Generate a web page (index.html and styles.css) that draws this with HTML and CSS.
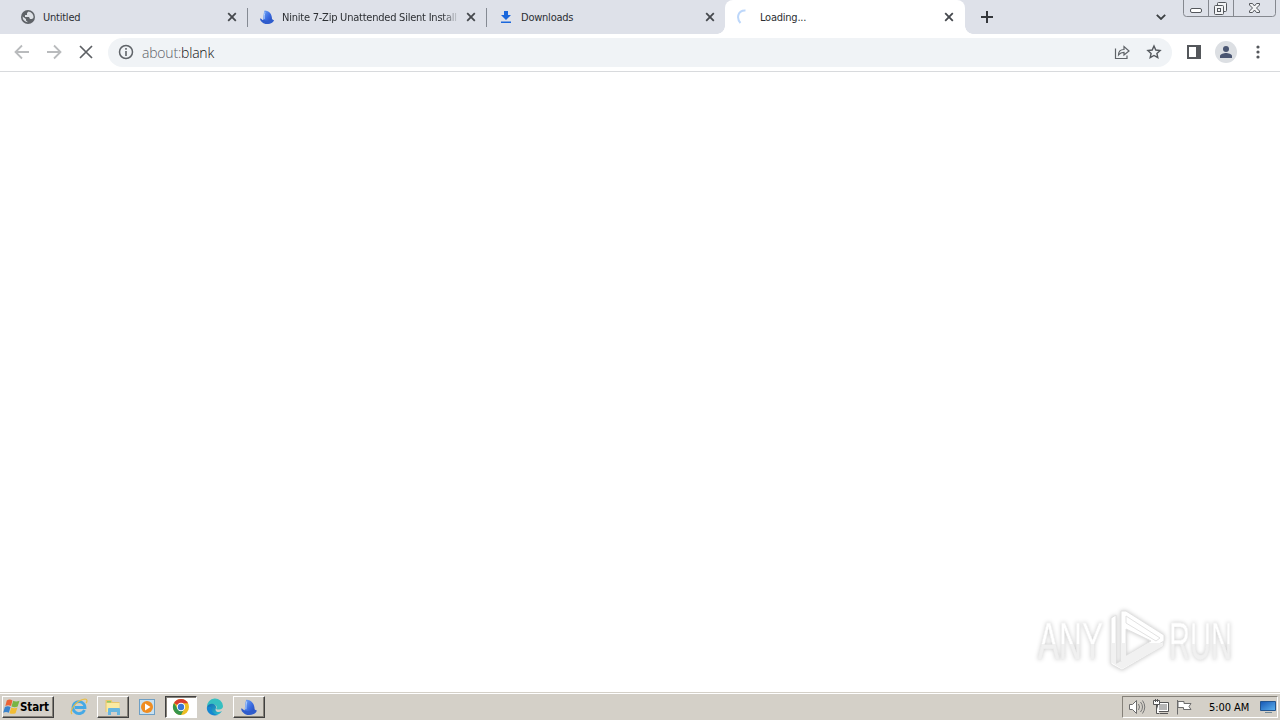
FILE: index.html
```html
<!DOCTYPE html>
<html lang="en"><head><meta charset="utf-8"><title>Loading...</title><link rel="stylesheet" href="styles.css"></head>
<body>
<svg width="0" height="0" class="defs"><defs>
<linearGradient id="fin" x1="0" y1="0" x2="1" y2="1"><stop offset="0" stop-color="#75a9f5"/><stop offset=".55" stop-color="#3869e0"/><stop offset="1" stop-color="#2347b0"/></linearGradient>
<linearGradient id="edge" x1="0" y1="0" x2="1" y2="1"><stop offset="0" stop-color="#1268b4"/><stop offset="1" stop-color="#2fc6cf"/></linearGradient>
<linearGradient id="screen" x1="0" y1="0" x2="1" y2="1"><stop offset="0" stop-color="#1556b3"/><stop offset="1" stop-color="#5eb3ef"/></linearGradient>
<symbol id="close" viewBox="0 0 10 10"><path d="M1.200 1.200l7.600 7.600M8.800 1.200L1.200 8.800" fill="none" stroke="currentColor" stroke-width="1.800"/></symbol>
<symbol id="shark" viewBox="0 0 16 16"><path d="M4 13C4.500 8 4.500 4 5.500 1.500c5 0 7.500 4 7.500 8.500v3c-3 2-6 2-9 0z" fill="url(#fin)"/><path d="M1 9.500c1.500-.5 2 2 4 1.500 3 1.500 6 .5 8-1 .5.5 1 1 2 1-1 4.500-9.500 5.500-12 2-1-.500-1.800-1.800-2-3.500z" fill="#2f5ccc"/><path d="M6 3c-.5 2-.8 4-.8 7" stroke="#a6c8ff" fill="none"/></symbol>
</defs></svg>
<header class="tabstrip">
 <div class="tab first"><svg class="fav" viewBox="0 0 16 16"><circle cx="8" cy="8" r="7" fill="#5f6368"/><path d="M8.500 2.500L7 4v2H5v2h4l1 2h2l1.400-1A5.500 5.500 0 0 0 8.500 2.500zM2.600 7.500L6 10v1.500l2 1.800A5.500 5.500 0 0 1 2.600 7.500z" fill="#dee1e6"/></svg><span class="title">Untitled</span><svg class="x"><use href="#close"/></svg></div>
 <div class="tab"><svg class="fav"><use href="#shark"/></svg><span class="title fade">Ninite 7-Zip Unattended Silent Install</span><svg class="x"><use href="#close"/></svg></div>
 <div class="tab last"><svg class="fav" viewBox="0 0 16 16"><path d="M6 2h4v4h3L8 11 3 6h3zM3 12.500h10V14H3z" fill="#1a67dc"/></svg><span class="title">Downloads</span><svg class="x"><use href="#close"/></svg></div>
 <div class="tab active"><svg class="fav" viewBox="0 0 16 16"><path d="M9.500 1.500C2 1 0 9 4.500 14" fill="none" stroke="#bdd7fa" stroke-width="2"/></svg><span class="title">Loading...</span><svg class="x"><use href="#close"/></svg></div>
 <svg class="plus" viewBox="0 0 12 12"><path d="M6 0v12M0 6h12" stroke="#34373b" stroke-width="2"/></svg>
 <svg class="chev" viewBox="0 0 10 6"><path d="M.8.8L5 5 9.200.8" fill="none" stroke="#3c4043" stroke-width="1.800"/></svg>
 <svg class="winctl" viewBox="0 0 94 18"><path d="M.5 0v13.500q0 3 3 3h86q3 0 3-3V0M25.500 0v16M50.500 0v16" fill="none" stroke="#85888f"/><rect x="7.500" y="8.500" width="11" height="4" rx="1.500" fill="#fff" stroke="#54575c"/><g fill="#f3f4f6" stroke="#54575c"><rect x="34.500" y="2.500" width="9" height="9" rx="1"/><rect x="31.500" y="5.500" width="9" height="9" rx="1"/><rect x="34.500" y="8.500" width="3" height="3"/><path d="M66.500 3.500h3l2 2.500 2-2.500h3v1.500L73.500 8l3 3v1.500h-3l-2-2.500-2 2.500h-3V11l3-3-3-3z"/></g></svg>
</header>
<nav class="toolbar">
 <svg class="nav" viewBox="0 0 16 16"><path d="M15 8H2M8 1.500L1.500 8 8 14.500" fill="none" stroke="#b9bbbd" stroke-width="1.800"/></svg>
 <svg class="nav" viewBox="0 0 16 16"><path d="M1 8h13M8 1.500L14.500 8 8 14.500" fill="none" stroke="#b9bbbd" stroke-width="1.800"/></svg>
 <svg class="nav" viewBox="0 0 16 16"><path d="M2 2l12 12M14 2L2 14" stroke="#5d6064" stroke-width="1.700"/></svg>
 <div class="omnibox">
  <svg class="info" viewBox="0 0 16 16"><circle cx="8" cy="8" r="6.500" fill="none" stroke="#5f6368" stroke-width="1.500"/><path d="M8 7v5M8 4v1.800" stroke="#5f6368" stroke-width="1.600"/></svg>
  <span class="url"><span class="scheme">about:</span>blank</span>
  <svg class="share" viewBox="0 0 16 16"><path d="M1.500 4.500v10h11.500v-3M4.500 11c0-4 2-5.500 5.500-5.500v-3L15 7l-5 4V8.300c-2.500 0-4 .7-5.500 2.700z" fill="none" stroke="#5f6368" stroke-width="1.200"/></svg>
  <svg class="star" viewBox="0 0 16 16"><path d="M8 2l1.800 4 4.300.500-3.200 2.900.9 4.300L8 11.500l-3.800 2.200.9-4.300L1.900 6.500 6.200 6z" fill="none" stroke="#54585d" stroke-width="1.400"/></svg>
 </div>
 <svg class="panel" viewBox="0 0 14 14"><path d="M0 0h14v14H0zM2 2v10h7V2z" fill="#54575b" fill-rule="evenodd"/></svg>
 <svg class="avatar" viewBox="0 0 22 22"><circle cx="11" cy="11" r="11" fill="#dcdfe3"/><circle cx="11" cy="8" r="3" fill="#4a5672"/><path d="M5 17v-2c0-2 4-3 6-3s6 1 6 3v2z" fill="#4a5672"/></svg>
 <svg class="dots" viewBox="0 0 4 14"><g fill="#54575b"><circle cx="2" cy="2" r="1.600"/><circle cx="2" cy="7" r="1.600"/><circle cx="2" cy="12" r="1.600"/></g></svg>
</nav>
<main class="page">
 <div class="watermark"><div class="half"><span class="word any">ANY</span></div>
 <svg class="play" viewBox="0 0 60 66"><g fill="#fff" stroke="#e2e2e2" stroke-width="1" stroke-linejoin="round"><path d="M3 9l5-3v49l43-25 4 3v4L14 61 3 55z"/><path d="M13 2l5 0 38 24v6l-39 23-4-3zM18 20v27l25-15z" fill-rule="evenodd"/><path d="M18 7v7l30 18 4-3z"/></g><path d="M4 34h4v21l47-21v3L14 60 4 54zM13 34h5v13l22-13h14L17 54l-4-2z" fill="#f1f1f1"/></svg>
 <div class="half"><span class="word run">RUN</span></div></div>
</main>
<footer class="taskbar">
 <div class="button start"><svg class="flag" viewBox="0 0 18 16"><path d="M4 1q3-2 6 0L8.500 7Q5.500 5.500 2.500 7z" fill="#eb6335"/><path d="M10.800 1.500q3 1.500 6.700 0l-2 6q-3 1.500-6.500 0z" fill="#78b543"/><path d="M2 8q3-1.500 6 0l-1.800 6q-3-1.500-6 0z" fill="#3a83cc"/><path d="M8.800 8.500q3.500 1.500 6.500 0l-2 6q-3 1.500-6.500 0z" fill="#f2bd34"/></svg><b>Start</b></div>
 <div class="slot"><svg viewBox="0 0 18 18"><path d="M14.500 12A6 6 0 1 1 15 9.500H5" fill="none" stroke="#45a9e6" stroke-width="2.800"/><path d="M2 16C-1 13 6 2 15 1c3 0 2 3 1 4" fill="none" stroke="#e8bd45" stroke-width="1.200"/></svg></div>
 <div class="slot button"><svg viewBox="0 0 18 18"><path d="M1.500 2h6l1 2h7v10h-14z" fill="#e8c66c"/><path d="M2.500 5h13v9h-13z" fill="#faeaa1"/><path d="M4 17v-6q0-1 1-1h10q1 0 1 1v6h-3v-3H7v3z" fill="#67b6df"/><path d="M3 3h4v1.500H3z" fill="#8bcc68"/></svg></div>
 <div class="slot"><svg viewBox="0 0 18 18"><rect x="1.500" y="1.500" width="15" height="15" fill="#c8e1f1" stroke="#6d9fc5"/><circle cx="9" cy="9" r="6" fill="#ef8d22"/><path d="M7 5.500v7L12.500 9z" fill="#fff"/></svg></div>
 <div class="slot button pressed"><svg viewBox="0 0 18 18"><circle cx="9" cy="9" r="8" fill="#edbd23"/><path d="M9 9L2 5A8 8 0 0 1 16.100 5.300H9z" fill="#d93d30"/><path d="M2 5A8 8 0 0 0 9 17l3.200-6.200L5.800 11z" fill="#37954b"/><circle cx="9" cy="9" r="4.200" fill="#fff"/><circle cx="9" cy="9" r="3.200" fill="#3976d6"/></svg></div>
 <div class="slot"><svg viewBox="0 0 18 18"><path d="M1 9A8 8 0 0 1 17 8c0 4-5 4-7 3 3-4-4-7-9-2z" fill="#36bfc1"/><path d="M1 9c2-5 10-4 9 1-2 4 3 5 6 3-4 7-14 4-15-4z" fill="url(#edge)"/><path d="M5 9c0 4 2 7 7 8-8 2-12-4-11-8z" fill="#1687d1"/></svg></div>
 <div class="slot button"><svg viewBox="0 0 16 16"><use href="#shark"/></svg></div>
 <div class="tray">
  <svg class="sound" viewBox="0 0 18 16"><path d="M1.500 5.500h3l4-4v13l-4-4h-3z" fill="#fff" stroke="#6c6c6c"/><path d="M10.500 5q2 3 0 6M12.500 3q4 5 0 10M14.500 1.500q4.500 6.500 0 13" fill="none" stroke="#777"/></svg>
  <svg class="net" viewBox="0 0 17 16"><path d="M4.500 3.500h11v9h-11zM7 14.500h8" fill="#fff" stroke="#555"/><path d="M6 5h8v6H6z" fill="#b5b5b5"/><path d="M.5 1.500h6v4h-6zM3.500 5.500v9h3" fill="#fff" stroke="#555"/><path d="M2.500 0v3M4.500 0v3" stroke="#555"/></svg>
  <svg class="pennant" viewBox="0 0 17 16"><path d="M1.500 1v14.500M2 2.500h6v2h7l-2 3 2 3H7.500v-2H2z" fill="#fff" stroke="#6c6c6c"/></svg>
  <span class="clock">5:00 AM</span>
  <svg class="desktop" viewBox="0 0 16 14"><path d="M.5 1.500h15v9H.5z" fill="url(#screen)" stroke="#23558f"/><path d="M5 12.500h7" stroke="#6f8796"/></svg>
 </div>
</footer>
</body></html>
```
FILE: styles.css
```css
*{box-sizing:border-box}
body{margin:0;width:1280px;height:720px;overflow:hidden;display:flex;flex-direction:column;background:#fff;font:11px "DejaVu Sans Condensed","DejaVu Sans",sans-serif;font-stretch:condensed;color:#2c2f33}
svg{display:block;flex:none}
.defs{position:absolute}
.tabstrip{height:34px;background:#dee1e9;display:flex;flex:none;padding-left:8px}
.tab{width:239px;height:34px;display:flex;align-items:center;padding:0 11px 0 11px;position:relative}
.first{width:240px;padding-left:12px}
.last{width:238px;padding-right:10px}
.tab:not(.active):not(.last)::after{content:"";position:absolute;right:0;top:8px;width:1px;height:19px;background:#858a93}
.fav{width:16px;height:16px;margin-right:7px}
.title{flex:1;min-width:0;overflow:hidden;white-space:nowrap;letter-spacing:-.23px;line-height:16px;padding-top:1px}
.fade{margin-right:-2px;-webkit-mask-image:linear-gradient(90deg,#000 90%,transparent);mask-image:linear-gradient(90deg,#000 90%,transparent)}
.x{width:10px;height:10px;margin-left:8px;color:#45484d}
.active{width:240px;background:#fff;border-radius:8px 8px 0 0}
.active .fav{margin-right:8px}
.active::before,.active::after{content:"";position:absolute;bottom:0;width:8px;height:8px}
.active::before{left:-8px;background:radial-gradient(circle at 0 0,transparent 7.5px,#fff 8px)}
.active::after{right:-8px;background:radial-gradient(circle at 100% 0,transparent 7.5px,#fff 8px)}
.plus{width:12px;height:12px;margin:11px 0 0 16px}
.chev{width:10px;height:6px;margin:14px 17px 0 auto}
.winctl{width:94px;height:18px;margin-right:3px}
.toolbar{height:38px;border-bottom:1px solid #d8dadd;display:flex;align-items:center;flex:none;padding:0 0 1px 14px}
.nav{width:16px;height:16px;margin-right:16px}
.nav:nth-child(3){margin-right:14px}
.omnibox{width:1064px;height:29px;border-radius:15px;background:#f0f3f6;display:flex;align-items:center;padding:0 10px}
.info{width:16px;height:16px}
.url{margin-left:8px;padding-top:1px;font:300 14px "Open Sans","Noto Sans",sans-serif;color:#111;letter-spacing:-.2px;flex:1}
.scheme{color:#5c6066}
.share,.star{width:16px;height:16px}
.share{margin-right:16px}
.panel{width:14px;height:14px;margin-left:15px}
.avatar{width:22px;height:22px;margin-left:14px}
.dots{width:4px;height:14px;margin-left:19px}
.page{flex:1;display:flex;align-items:flex-end;justify-content:flex-end;padding:0 46px 17px 0}
.watermark{width:196px;height:66px;display:flex;align-items:center;filter:drop-shadow(0 0 2px #c8c8c8)}
.half{width:66px;height:56px;flex:none}
.word{display:inline-block;font:51px/56px "Liberation Sans",sans-serif;-webkit-text-stroke:.4px #eee;transform-origin:0 50%;white-space:nowrap;background:linear-gradient(#fff 54%,#f0f0f0 54%);-webkit-background-clip:text;background-clip:text;-webkit-text-fill-color:transparent}
.any{transform:scaleX(.62)}
.run{transform:scaleX(.57)}
.play{width:60px;height:66px;margin:0 1px 0 4px}
.taskbar{height:28px;background:#d4d0c8;border-top:1px solid #d4d0c8;box-shadow:inset 0 1px #fff;display:flex;flex:none;padding:3px 2px 2px;color:#000}
.button{border:1px solid;border-color:#fff #404040 #404040 #fff;box-shadow:inset -1px -1px #858179}
.start{width:52px;height:22px;display:flex;align-items:center;margin-right:9px}
.start b{font-size:11.5px;letter-spacing:-.1px}
.flag{width:17px;height:16px}
.slot{width:32px;height:22px;display:flex;align-items:center;justify-content:center;margin-right:2px}
.slot svg{width:18px;height:18px}
.pressed{background:#fff;border-color:#404040 #fff #fff #404040;box-shadow:inset 1px 1px #858179}
.tray{width:156px;height:22px;border:1px solid;border-color:#858179 #fff #fff #858179;margin-left:auto;display:flex;align-items:center;padding-left:5px}
.sound{width:18px;height:16px;margin-right:7px}
.net{width:17px;height:16px;margin-right:6px}
.pennant{width:17px;height:16px}
.clock{margin-left:16px;width:43px;letter-spacing:-.05px;white-space:nowrap}
.desktop{width:16px;height:14px;margin-left:8px}
```
